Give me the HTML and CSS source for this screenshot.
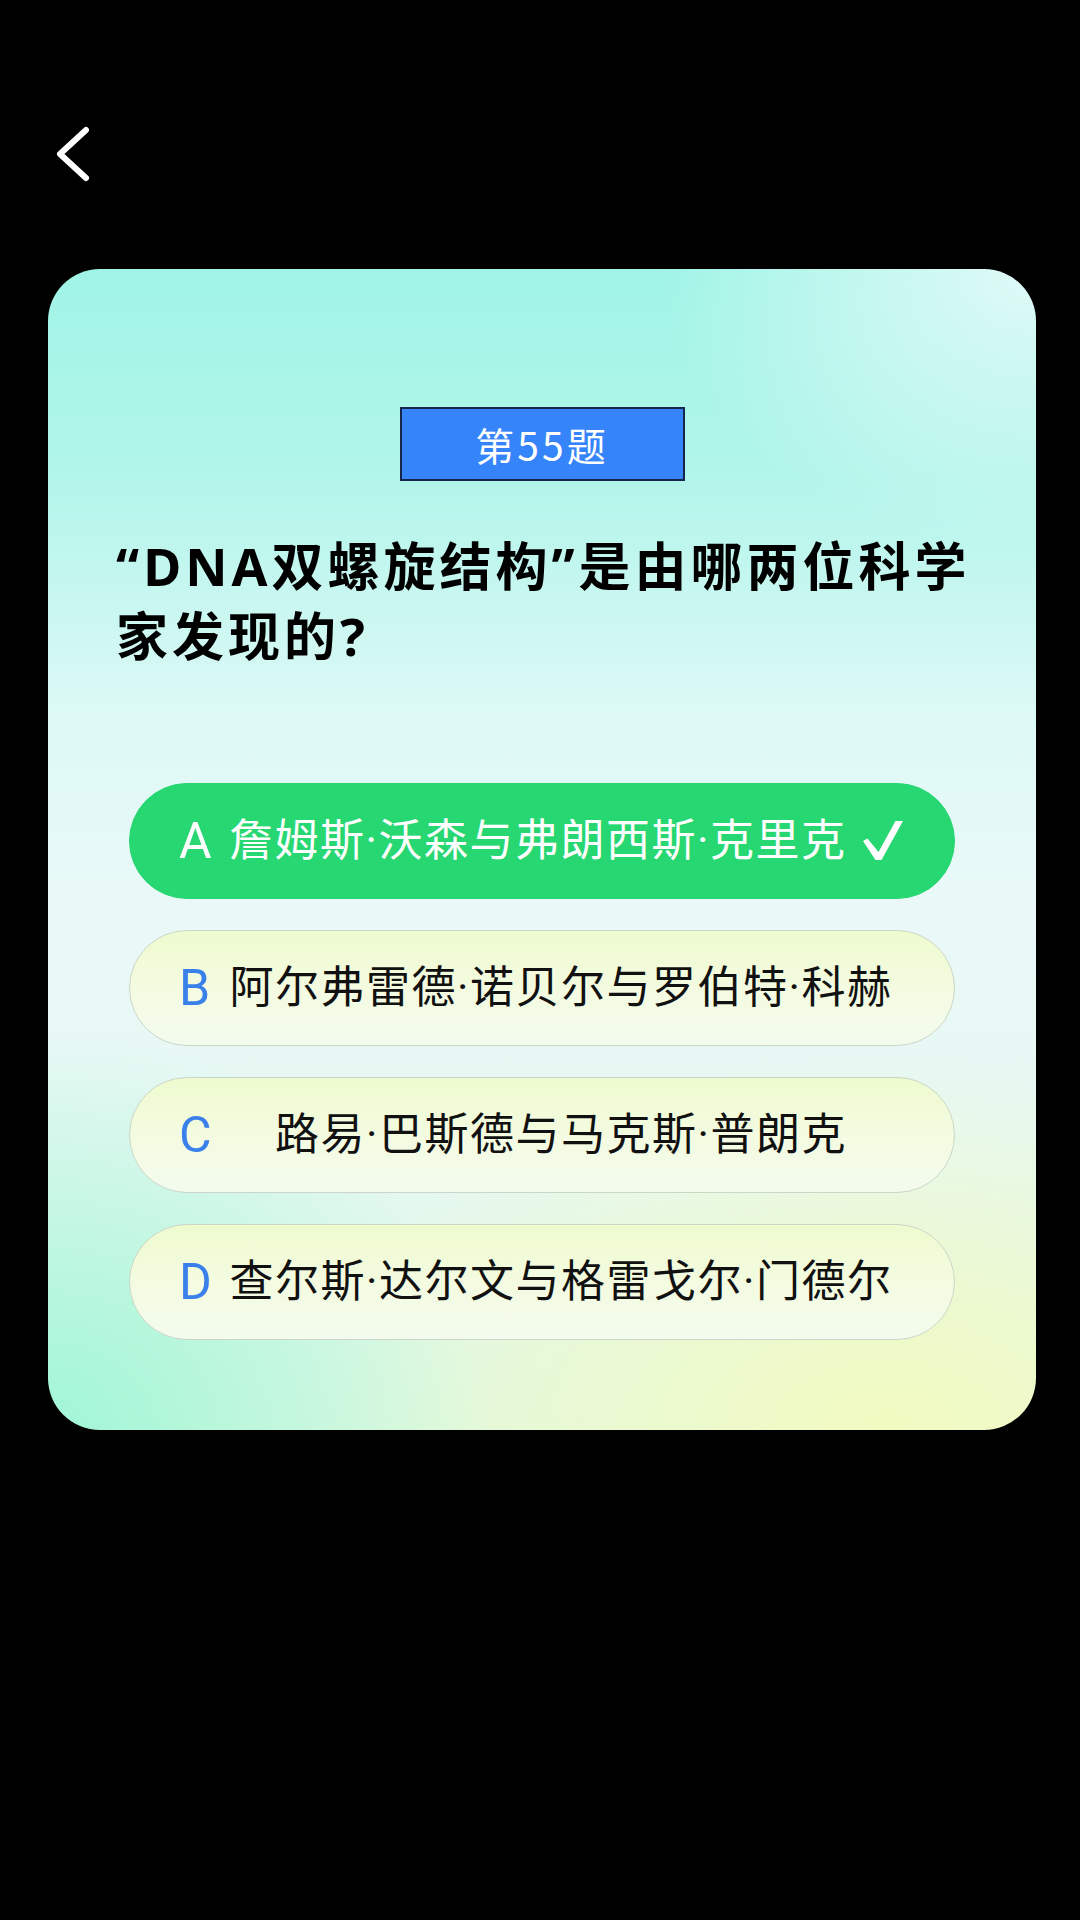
FILE: index.html
```html
<!DOCTYPE html>
<html lang="zh-CN">
<head>
<meta charset="utf-8">
<title>答题</title>
<link rel="stylesheet" href="styles.css">
</head>
<body>
<div class="topbar">
  <svg class="back" viewBox="0 0 40 56" width="40" height="56" aria-hidden="true">
    <path d="M34 4 L8 28 L34 52" fill="none" stroke="#ffffff" stroke-width="6" stroke-linecap="round" stroke-linejoin="round"/>
  </svg>
</div>
<main class="card">
  <div class="badge">第55题</div>
  <h1 class="question">“DNA双螺旋结构”是由哪两位科学家发现的?</h1>
  <div class="options">
    <div class="option correct">
      <span class="letter">A</span>
      <span class="text">詹姆斯·沃森与弗朗西斯·克里克<svg class="check" viewBox="0 0 40 40" width="40" height="40" aria-hidden="true"><polygon points="0,20 4.5,17.5 15.5,31 32.5,0 40,0 18.5,39 12.5,39" fill="#ffffff"/></svg></span>
    </div>
    <div class="option">
      <span class="letter">B</span>
      <span class="text">阿尔弗雷德·诺贝尔与罗伯特·科赫</span>
    </div>
    <div class="option">
      <span class="letter">C</span>
      <span class="text">路易·巴斯德与马克斯·普朗克</span>
    </div>
    <div class="option">
      <span class="letter">D</span>
      <span class="text">查尔斯·达尔文与格雷戈尔·门德尔</span>
    </div>
  </div>
</main>
</body>
</html>
```
FILE: styles.css
```css
html, body {
  margin: 0;
  padding: 0;
  background: #000000;
}
body {
  width: 1080px;
  height: 1920px;
  font-family: Roboto, "Noto Sans CJK SC", sans-serif;
}
.topbar {
  height: 269px;
  box-sizing: border-box;
  padding: 126px 0 0 52px;
  display: flex;
  align-items: flex-start;
}
.back {
  display: block;
}
.card {
  margin-left: 48px;
  width: 988px;
  height: 1161px;
  box-sizing: border-box;
  border-radius: 52px;
  padding: 138px 0 90px;
  display: flex;
  flex-direction: column;
  align-items: center;
  background:
    radial-gradient(ellipse 38% 24% at 100% 0%, rgba(236,251,251,0.85), rgba(236,251,251,0)),
    radial-gradient(ellipse 45% 34% at 0% 100%, rgba(160,246,214,1), rgba(160,246,214,0)),
    radial-gradient(ellipse 60% 32% at 85% 100%, rgba(242,250,192,1), rgba(242,250,192,0)),
    linear-gradient(180deg, #a0f4e6 0%, #b2f5ea 18%, #dcf9f6 38%, #eaf9f8 55%, #e6f8f2 75%, #e0f8e4 100%);
}
.badge {
  width: 285px;
  height: 75px;
  box-sizing: border-box;
  border: 2px solid #16254a;
  background: #3584fa;
  color: #ffffff;
  font-family: "Noto Sans CJK SC", sans-serif;
  font-size: 39px;
  letter-spacing: 3px;
  display: flex;
  align-items: center;
  justify-content: center;
}
.question {
  margin: 50px 0 0;
  width: 100%;
  box-sizing: border-box;
  padding: 0 40px 0 68px;
  font-size: 52px;
  font-weight: 700;
  line-height: 70px;
  letter-spacing: 4px;
  color: #000000;
  font-family: "Noto Sans", "Noto Sans CJK SC", sans-serif;
}
.options {
  margin-top: 112px;
  width: 826px;
  display: flex;
  flex-direction: column;
  gap: 31px;
}
.option {
  height: 116px;
  box-sizing: border-box;
  border-radius: 58px;
  border: 1.5px solid #ccd6c8;
  background: linear-gradient(180deg, #eefbcf 0%, #f4fbe2 55%, #f3fbee 100%);
  display: flex;
  align-items: center;
  padding: 0 61px 0 49px;
}
.option.correct {
  background: #27d772;
  border-color: #27d772;
}
.letter {
  width: 50px;
  flex: none;
  font-family: Roboto, "Noto Sans", sans-serif;
  font-size: 50px;
  color: #3a80ea;
  line-height: 1;
}
.correct .letter {
  color: #ffffff;
}
.text {
  flex: 1;
  display: flex;
  align-items: center;
  justify-content: center;
  font-size: 44px;
  letter-spacing: 1.5px;
  color: #111111;
  white-space: nowrap;
  line-height: 1;
}
.correct .text {
  color: #ffffff;
}
.check {
  display: block;
  margin-left: 16px;
  flex: none;
}
```
